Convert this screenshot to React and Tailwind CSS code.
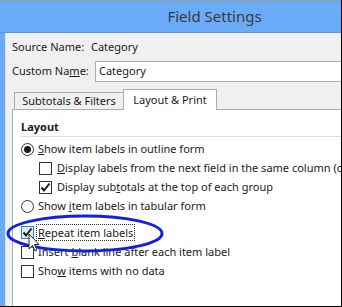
import React from "react";

const font = { fontFamily: '"Noto Sans", "Open Sans", sans-serif' };

function Check() {
  return (
    <svg width="11" height="11" viewBox="0 0 11 11" className="absolute left-[0px] top-[0px]">
      <path d="M1.5 5.5 L4 8.5 L9.5 1.5" fill="none" stroke="#1a1a1a" strokeWidth="2" />
    </svg>
  );
}

function CheckBox({ checked, focus }) {
  return (
    <span
      className={
        "relative inline-block w-[13px] h-[13px] shrink-0 border " +
        (focus ? "border-[#3c7fb1] bg-[#dceefc]" : "border-[#333] bg-white")
      }
    >
      {checked && <Check />}
    </span>
  );
}

function Radio({ checked }) {
  return (
    <span className="flex items-center justify-center w-[13px] h-[13px] shrink-0 rounded-full border border-[#333] bg-white">
      {checked && <span className="w-[7px] h-[7px] rounded-full bg-[#1a1a1a]" />}
    </span>
  );
}

export default function App() {
  return (
    <div
      className="relative w-[342px] h-[307px] overflow-hidden bg-[#6aabf8] border-r border-b border-black text-[11px] text-[#1a1a1a] whitespace-nowrap"
      style={font}
    >
      <div className="h-[1px] bg-[#9a9a9a]" />
      <div className="h-[32px] flex items-center justify-center pl-[88px] text-[15px] text-[#3a3a3a] border-b border-[#5b93dd]">
        Field Settings
      </div>
      <div className="flex h-[273px]">
        <div className="w-[6px] shrink-0 bg-[#6aabf8] border-r border-[#d8e8f8]" />
        <div className="flex-1 bg-[#f0f0f0] flex flex-col">
          <div className="flex items-center h-[14px] mt-[7px] pl-[6px]">
            <span className="w-[79px]">Source Name:</span>
            <span>Category</span>
          </div>
          <div className="flex items-center mt-[7px] pl-[6px]">
            <span className="w-[83px]">
              Custom Na<span className="underline">m</span>e:
            </span>
            <div className="flex-1 h-[21px] border border-[#abadb3] border-r-0 bg-white flex items-center pl-[3px]">
              Category
            </div>
          </div>
          <div className="flex items-end mt-[7px] pl-[8px] h-[20px]">
            <div className="h-[17px] w-[110px] border border-b-0 border-[#acacac] bg-[#f0f0f0] flex items-center justify-center">
              Subtotals &amp; Filters
            </div>
            <div className="relative h-[21px] w-[94px] -ml-[1px] border border-b-0 border-[#acacac] bg-white flex items-center justify-center -mb-[1px] z-10">
              Layout &amp; Print
            </div>
          </div>
          <div className="flex-1 ml-[6px] border-l border-t border-[#acacac] bg-white pl-[8px] pt-[10px]">
            <div className="font-bold h-[14px] flex items-center">Layout</div>
            <div className="h-[1px] bg-[#dcdcdc] mt-[2px]" />
            <div className="flex items-center gap-[4px] mt-[4px] h-[16px]">
              <Radio checked />
              <span>
                <span className="underline">S</span>how item labels in outline form
              </span>
            </div>
            <div className="flex items-center gap-[5px] mt-[3px] h-[16px] pl-[18px]">
              <CheckBox />
              <span>
                <span className="underline">D</span>isplay labels from the next field in the same column (c
              </span>
            </div>
            <div className="flex items-center gap-[5px] mt-[3px] h-[16px] pl-[18px]">
              <CheckBox checked />
              <span>
                Display sub<span className="underline">t</span>otals at the top of each group
              </span>
            </div>
            <div className="flex items-center gap-[4px] mt-[3px] h-[16px]">
              <Radio />
              <span>
                Show <span className="underline">i</span>tem labels in tabular form
              </span>
            </div>
            <div className="flex items-center gap-[2px] mt-[10px] h-[17px]">
              <CheckBox checked focus />
              <span className="border border-dotted border-[#333] px-[1px] leading-[15px]">
                <span className="underline">R</span>epeat item labels
              </span>
            </div>
            <div className="flex items-center gap-[4px] mt-[3px] h-[16px]">
              <CheckBox />
              <span>
                Insert <span className="underline">b</span>lank line after each item label
              </span>
            </div>
            <div className="flex items-center gap-[4px] mt-[3px] h-[16px]">
              <CheckBox />
              <span>
                Sho<span className="underline">w</span> items with no data
              </span>
            </div>
          </div>
        </div>
      </div>
      <svg className="absolute left-0 top-0 pointer-events-none" width="342" height="307">
        <ellipse cx="85" cy="233.5" rx="77" ry="17.5" fill="none" stroke="#1020e0" strokeWidth="3" />
        <path
          d="M29 234 L29 249 L32.5 245.5 L35 251 L37 250 L34.5 244.5 L39 244.5 Z"
          fill="#fff"
          stroke="#222"
          strokeWidth="1"
          strokeLinejoin="round"
        />
      </svg>
    </div>
  );
}
